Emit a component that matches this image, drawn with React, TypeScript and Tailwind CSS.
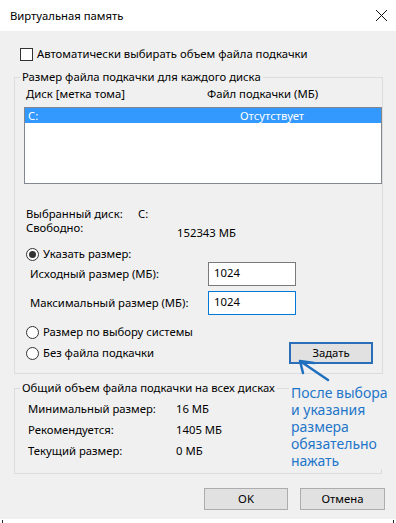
function Radio({ checked }: { checked?: boolean }) {
  return (
    <span className="w-[13px] h-[13px] rounded-full border border-[#333333] bg-white flex items-center justify-center shrink-0">
      {checked && <span className="w-[7px] h-[7px] rounded-full bg-[#333333]" />}
    </span>
  );
}

export default function App() {
  return (
    <div className="w-[396px] h-[523px] flex flex-col bg-white font-['Noto_Sans',sans-serif] text-[11.3px] leading-[16px] text-black relative overflow-hidden">
      <div className="h-[31px] shrink-0 flex items-center justify-between pl-[10px] pr-[8px]">
        <span>Виртуальная память</span>
        <svg width="13" height="13" viewBox="0 0 13 13">
          <path d="M1 1L12 12M12 1L1 12" stroke="#111" strokeWidth="1" />
        </svg>
      </div>

      <div className="flex-1 bg-[#f0f0f0] px-[14px] pt-[15px] flex flex-col">
        <div className="flex items-center gap-[4px] pl-[6px]">
          <span className="w-[13px] h-[13px] border border-[#333333] bg-white shrink-0" />
          <span>Автоматически выбирать объем файла подкачки</span>
        </div>

        <fieldset className="mt-[7px] border border-[#dcdcdc] pl-[11px] pr-0 pb-[9px] w-[368px]">
          <legend className="ml-[-6px] px-[2px]">Размер файла подкачки для каждого диска</legend>
          <div className="mt-[1px] flex">
            <span className="w-[181px]">Диск [метка тома]</span>
            <span>Файл подкачки (МБ)</span>
          </div>
          <div className="mt-[5px] ml-[-2px] w-[358px] h-[77px] border border-[#828790] bg-white">
            <div className="h-[15px] bg-[#3399ff] text-white flex items-center pl-[3px]">
              <span className="w-[212px]">C:</span>
              <span>Отсутствует</span>
            </div>
          </div>

          <div className="mt-[23px] flex leading-[14px]">
            <span className="w-[112px]">Выбранный диск:</span>
            <span>C:</span>
          </div>
          <div className="flex leading-[14px]">
            <span className="w-[151px]">Свободно:</span>
            <span className="mt-[5px]">152343 МБ</span>
          </div>

          <div className="mt-[6px] flex items-center gap-[4px]">
            <Radio checked />
            <span>Указать размер:</span>
          </div>
          <div className="flex items-center">
            <span className="w-[182px] pl-[4px]">Исходный размер (МБ):</span>
            <div className="w-[88px] h-[24px] border border-[#7a7a7a] bg-white pl-[5px] pt-[2px]">1024</div>
          </div>
          <div className="mt-[5px] flex items-center">
            <span className="w-[182px] pl-[4px]">Максимальный размер (МБ):</span>
            <div className="w-[88px] h-[24px] border border-[#0078d7] bg-white pl-[5px] pt-[2px]">1024</div>
          </div>

          <div className="mt-[9px] flex items-center gap-[4px]">
            <Radio />
            <span>Размер по выбору системы</span>
          </div>
          <div className="mt-[2px] flex items-center justify-between">
            <div className="flex items-center gap-[4px]">
              <Radio />
              <span>Без файла подкачки</span>
            </div>
            <button
              type="button"
              className="mr-[9px] w-[84px] h-[22px] bg-[#e1e1e1] border-2 border-[#2a6fb8] flex items-center justify-center"
            >
              Задать
            </button>
          </div>
        </fieldset>

        <fieldset className="mt-[6px] border border-[#dcdcdc] pl-[13px] pr-0 pb-[14px] w-[368px]">
          <legend className="ml-[-8px] px-[2px]">Общий объем файла подкачки на всех дисках</legend>
          <div className="mt-[5px] flex flex-col gap-[5px]">
            <div className="flex">
              <span className="w-[148px]">Минимальный размер:</span>
              <span>16 МБ</span>
            </div>
            <div className="flex">
              <span className="w-[148px]">Рекомендуется:</span>
              <span>1405 МБ</span>
            </div>
            <div className="flex">
              <span className="w-[148px]">Текущий размер:</span>
              <span>0 МБ</span>
            </div>
          </div>
        </fieldset>

        <div className="mt-[14px] mr-[-3px] flex justify-end gap-[12px]">
          <button type="button" className="w-[84px] h-[22px] bg-[#e1e1e1] border border-[#adadad] flex items-center justify-center">
            OK
          </button>
          <button type="button" className="w-[85px] h-[22px] bg-[#e1e1e1] border border-[#adadad] flex items-center justify-center">
            Отмена
          </button>
        </div>
      </div>

      <div className="h-[4px] shrink-0 flex justify-between px-[2px]">
        <span className="w-[1px] h-[3px] mt-[1px] bg-[#222]" />
        <span className="w-[1px] h-[3px] mt-[1px] bg-[#222]" />
      </div>

      <div className="absolute left-[289px] top-[384px] bg-[#f0f0f0] pl-[2px] pr-[4px] text-[14px] leading-[17px] text-[#1f76c9] whitespace-nowrap">
        <div>После выбора</div>
        <div>и указания</div>
        <div>размера</div>
        <div>обязательно</div>
        <div>нажать</div>
      </div>

      <svg className="absolute left-[290px] top-[355px]" width="45" height="30" viewBox="0 0 45 30">
        <path d="M10 6L38 25M10 6L24 8M10 6L13 18" stroke="#1f6fbf" strokeWidth="2.5" strokeLinecap="round" fill="none" />
      </svg>
    </div>
  );
}
